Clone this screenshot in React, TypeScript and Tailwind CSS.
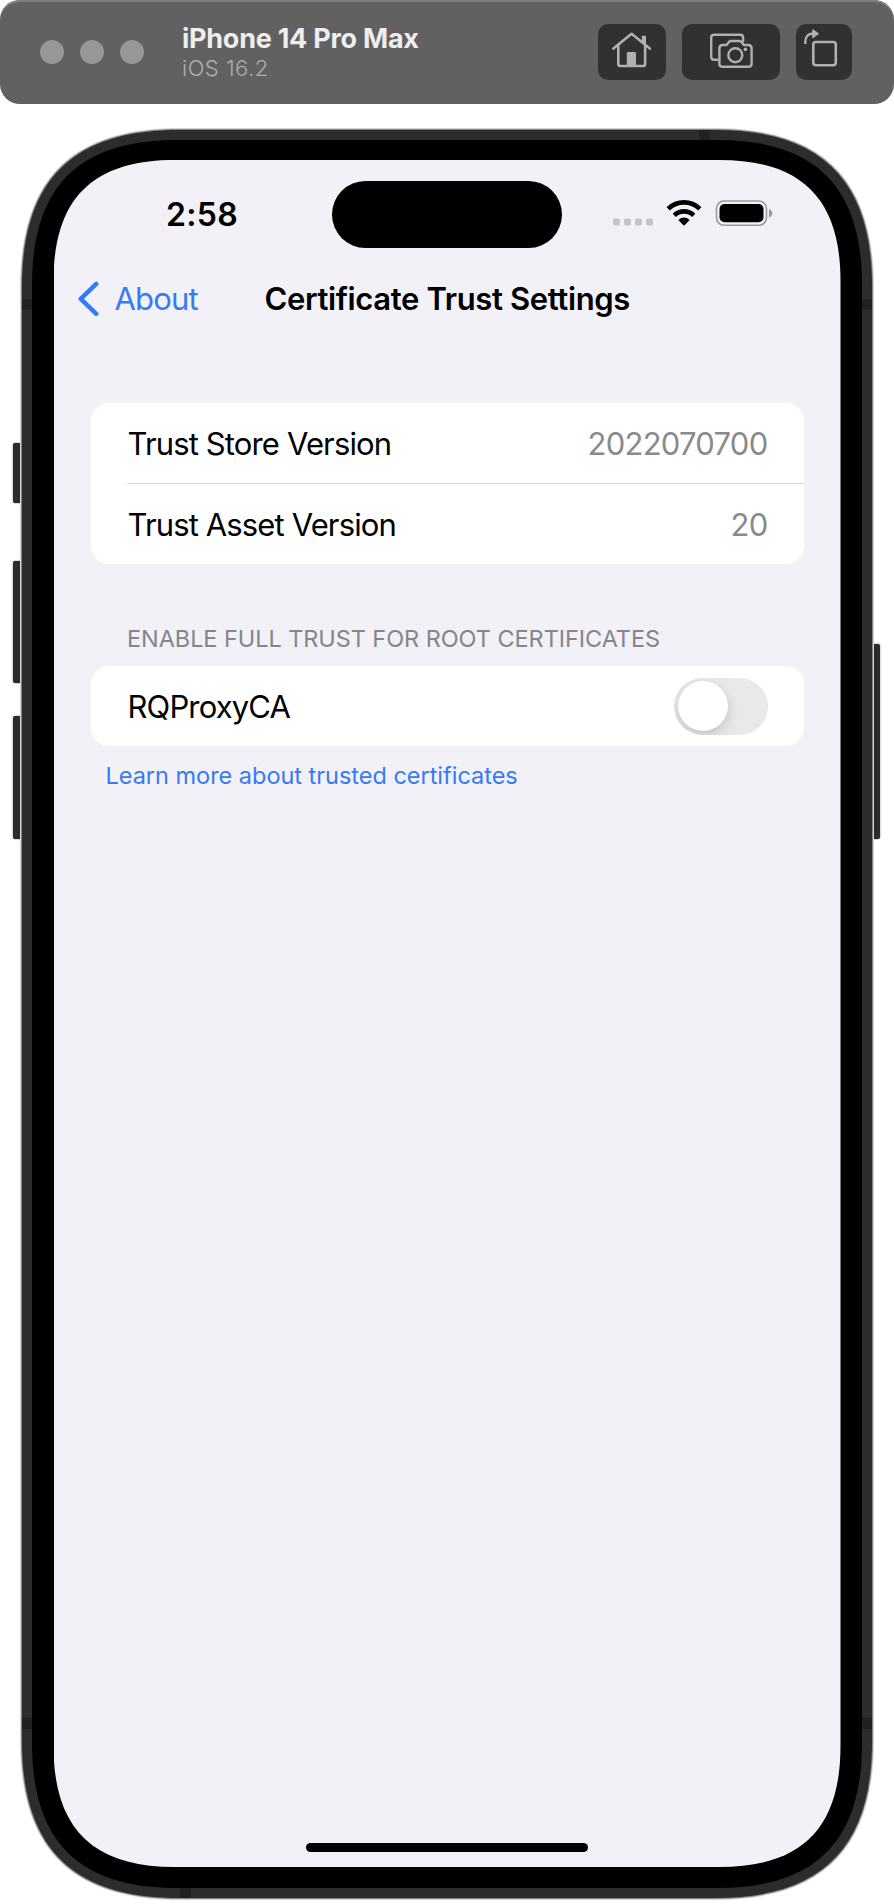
import React from "react";

/** Outline of a rectangle with softly eased corners, slightly longer than circular ones. */
function easedRect(w: number, h: number, r: number): string {
  const l = 1.2 * r;
  const c = 0.32 * l;
  return [
    `M${l} 0 L${w - l} 0`,
    `C${w - c} 0 ${w} ${c} ${w} ${l}`,
    `L${w} ${h - l}`,
    `C${w} ${h - c} ${w - c} ${h} ${w - l} ${h}`,
    `L${l} ${h}`,
    `C${c} ${h} 0 ${h - c} 0 ${h - l}`,
    `L0 ${l}`,
    `C0 ${c} ${c} 0 ${l} 0 Z`,
  ].join(" ");
}

function Layer({
  w,
  h,
  r,
  className,
  children,
}: {
  w: number;
  h: number;
  r: number;
  className: string;
  children?: React.ReactNode;
}) {
  return (
    <div
      className={className}
      style={{ width: w, height: h, clipPath: `path("${easedRect(w, h, r)}")` }}
    >
      {children}
    </div>
  );
}

function HomeIcon() {
  return (
    <svg width="68" height="56" viewBox="0 0 68 56" fill="none" stroke="#b0b0b0" strokeWidth="2.6" strokeLinecap="round" strokeLinejoin="round">
      <path d="M15.400 24.600 L33.600 9.800 L51.800 24.600" />
      <path d="M20.300 22v18q0 2 2 2h22.800q2 0 2-2V22" />
      <path d="M43.800 12.600q0-.8.8-.8h2.600q.8 0 .8.800v9l-4.200-3.400z" fill="#b0b0b0" stroke="none" />
      <path d="M28.800 43V29.400q0-1.400 1.400-1.400h6.400q1.400 0 1.400 1.400V43z" fill="#b0b0b0" stroke="none" />
    </svg>
  );
}

function ScreenshotIcon() {
  return (
    <svg width="98" height="56" viewBox="0 0 98 56" fill="none" stroke="#b0b0b0" strokeWidth="2.4" strokeLinecap="round" strokeLinejoin="round">
      <path d="M36 35.800h-4q-2.800 0-2.800-3V13.600q0-2.900 2.800-2.900h26.200q2.900 0 2.900 2.900V17" />
      <path d="M40.600 21h4l2.300-3q.8-1 2-1h8.600q1.200 0 2 1l2.300 3h4.600q3.200 0 3.200 3.300v15.600q0 2.900-3.200 2.900H40.600q-3.200 0-3.200-2.900V24.300q0-3.300 3.200-3.300z" />
      <circle cx="53.300" cy="31.200" r="7" />
      <circle cx="63.400" cy="25.400" r="1.800" fill="#b0b0b0" stroke="none" />
    </svg>
  );
}

function RotateIcon() {
  return (
    <svg width="56" height="56" viewBox="0 0 56 56" fill="none" stroke="#b0b0b0" strokeWidth="2.6" strokeLinecap="round" strokeLinejoin="round">
      <rect x="17.300" y="18" width="22.500" height="23.200" rx="2.600" />
      <path d="M9.400 20.200q-.8-10.700 8.200-10.700" strokeLinecap="butt" strokeWidth="2.300" />
      <path d="M17 5.800l5.600 3.900-5.600 4z" fill="#b0b0b0" strokeWidth="1" />
    </svg>
  );
}

function ToolButton({ children }: { children: React.ReactNode }) {
  return <button className="h-14 rounded-[10px] bg-[#313131]">{children}</button>;
}

function Toolbar() {
  return (
    <header className="flex h-[104px] w-full items-center rounded-[20px] bg-[#616161] pr-[42px] pl-10 shadow-[inset_0_2px_0_#7e7e7e]">
      <div className="flex gap-4">
        <span className="size-6 rounded-full bg-[#979797]" />
        <span className="size-6 rounded-full bg-[#979797]" />
        <span className="size-6 rounded-full bg-[#979797]" />
      </div>
      <div className="ml-[38px] flex flex-col pt-[2px]">
        <span className="text-[27px] leading-[30px] font-bold tracking-[-0.25px] text-[#eeeeee]">iPhone 14 Pro Max</span>
        <span className="text-[22px] leading-[28px] font-light tracking-[0.5px] text-[#adadad]">iOS 16.2</span>
      </div>
      <div className="ml-auto flex gap-4">
        <ToolButton><HomeIcon /></ToolButton>
        <ToolButton><ScreenshotIcon /></ToolButton>
        <ToolButton><RotateIcon /></ToolButton>
      </div>
    </header>
  );
}

function StatusIcons() {
  return (
    <svg width="162" height="28" viewBox="0 0 162 28" fill="none">
      <g fill="#c4c3c8">
        <rect x="1" y="18.500" width="7" height="7" rx="2" />
        <rect x="12" y="18.500" width="7" height="7" rx="2" />
        <rect x="23" y="18.500" width="7" height="7" rx="2" />
        <rect x="34" y="18.500" width="7" height="7" rx="2" />
      </g>
      <g stroke="#000" strokeWidth="4.6">
        <path d="M56.200 8.800a22.600 22.600 0 0 1 31.600 0" />
        <path d="M62.300 15.400a13.800 13.800 0 0 1 19.400 0" />
      </g>
      <path d="M66.300 20q5.700-4.800 11.400 0L72 25.700z" fill="#000" />
      <rect x="104.500" y="1" width="50" height="24.300" rx="7.500" stroke="#9b9a9e" strokeWidth="1.600" />
      <rect x="107.500" y="4" width="44" height="18.200" rx="5" fill="#000" />
      <path d="M157 9q3.300 1.300 3.300 4.200T157 17.400z" fill="#9b9a9e" />
    </svg>
  );
}

function StatusBar() {
  return (
    <div className="flex h-[67px] items-center">
      <div className="flex w-[278.500px] justify-start pl-[112.500px]">
        <span className="text-[32px] leading-[40px] font-semibold tracking-[0.3px] text-black">2:58</span>
      </div>
      <div className="h-[67px] w-[230px] rounded-full bg-black" />
      <div className="ml-[49.500px] pb-[2px]">
        <StatusIcons />
      </div>
    </div>
  );
}

function NavBar() {
  return (
    <nav className="mt-[29px] flex h-[44px] items-center pl-[23px]">
      <a className="flex w-[188px] items-center text-[#357af6]">
        <svg width="24" height="36" viewBox="0 0 24 36" fill="none" stroke="currentColor" strokeWidth="4.4" strokeLinecap="round" strokeLinejoin="round">
          <path d="M19.300 2.900L3.700 17.800L19.300 32.800" />
        </svg>
        <span className="ml-[14px] text-[31px] leading-[40px] tracking-[-0.8px]">About</span>
      </a>
      <h1 className="text-[31px] leading-[40px] font-semibold tracking-[-0.37px] whitespace-nowrap text-black">
        Certificate Trust Settings
      </h1>
    </nav>
  );
}

function Row({ label, children }: { label: string; children: React.ReactNode }) {
  return (
    <div className="flex h-20 items-center justify-between pr-[36px] pl-[37px]">
      <span className="pt-0.5 text-[31px] leading-[40px] tracking-[-0.86px] text-black">{label}</span>
      {children}
    </div>
  );
}

function Value({ children }: { children: React.ReactNode }) {
  return <span className="pt-0.5 text-[31px] leading-[40px] tracking-[-0.75px] text-[#8a8a8e]">{children}</span>;
}

function Settings() {
  return (
    <main className="px-[37px]">
      <section className="mt-[82px] rounded-[18px] bg-white">
        <Row label="Trust Store Version"><Value>2022070700</Value></Row>
        <div className="ml-[36px] h-px bg-[#d9d9db]" />
        <Row label="Trust Asset Version"><Value>20</Value></Row>
      </section>
      <h2 className="mt-[59px] pl-[36.500px] text-[23.500px] leading-[32px] tracking-[-0.07px] whitespace-nowrap text-[#85858b]">
        ENABLE FULL TRUST FOR ROOT CERTIFICATES
      </h2>
      <section className="mt-[11px] rounded-[18px] bg-white">
        <Row label="RQProxyCA">
          <span className="flex h-[57px] w-[94px] items-center overflow-hidden rounded-full bg-[#e9e9ea] pl-[4px]">
            <span className="size-[50px] rounded-full bg-white shadow-[0_5px_14px_rgba(0,0,0,0.15),0_1px_3px_rgba(0,0,0,0.06)]" />
          </span>
        </Row>
      </section>
      <a className="mt-[14px] block pl-[15px] text-[23.500px] leading-[32px] tracking-[-0.02px] text-[#357af6]">
        Learn more about trusted certificates
      </a>
    </main>
  );
}

function SideButtons() {
  return (
    <>
      <span className="absolute top-[315px] left-[13px] h-[60px] w-3 rounded-[2px] bg-[#2b2b2b] shadow-[0_0_2px_#777]" />
      <span className="absolute top-[433px] left-[13px] h-[122px] w-3 rounded-[2px] bg-[#2b2b2b] shadow-[0_0_2px_#777]" />
      <span className="absolute top-[588px] left-[13px] h-[123px] w-3 rounded-[2px] bg-[#2b2b2b] shadow-[0_0_2px_#777]" />
      <span className="absolute top-[516px] right-[14px] h-[195px] w-3 rounded-[2px] bg-[#2b2b2b] shadow-[0_0_2px_#777]" />
    </>
  );
}

function AntennaBands() {
  return (
    <>
      <span className="absolute top-0 left-[677px] h-3 w-[11px] bg-[#212121]" />
      <span className="absolute bottom-0 left-[158px] h-3 w-[11px] bg-[#212121]" />
      <span className="absolute top-[169px] left-0 h-[11px] w-full bg-[#212121]" />
      <span className="absolute bottom-[169px] left-0 h-[11px] w-full bg-[#212121]" />
    </>
  );
}

function Phone() {
  return (
    <div className="relative mt-[24px] flex justify-center">
      <SideButtons />
      <Layer w={854} h={1772} r={133} className="relative flex items-center justify-center bg-[#d4d4d4]">
        <Layer w={852} h={1770} r={132} className="flex items-center justify-center bg-[#858585]">
          <Layer w={850} h={1768} r={131} className="relative flex items-center justify-center bg-[#2c2c2c]">
            <AntennaBands />
            <Layer w={830} h={1748} r={121} className="relative flex justify-center bg-black pt-5">
              <Layer w={787} h={1707} r={101} className="flex flex-col bg-[#f2f1f7] pt-[21px]">
                <StatusBar />
                <NavBar />
                <Settings />
                <div className="mx-auto mt-auto mb-[15px] h-[9px] w-[282px] shrink-0 rounded-full bg-black" />
              </Layer>
            </Layer>
          </Layer>
        </Layer>
      </Layer>
    </div>
  );
}

export default function App() {
  return (
    <div className="h-[1904px] w-[894px] overflow-hidden bg-white font-['Inter',sans-serif]">
      <Toolbar />
      <Phone />
    </div>
  );
}
